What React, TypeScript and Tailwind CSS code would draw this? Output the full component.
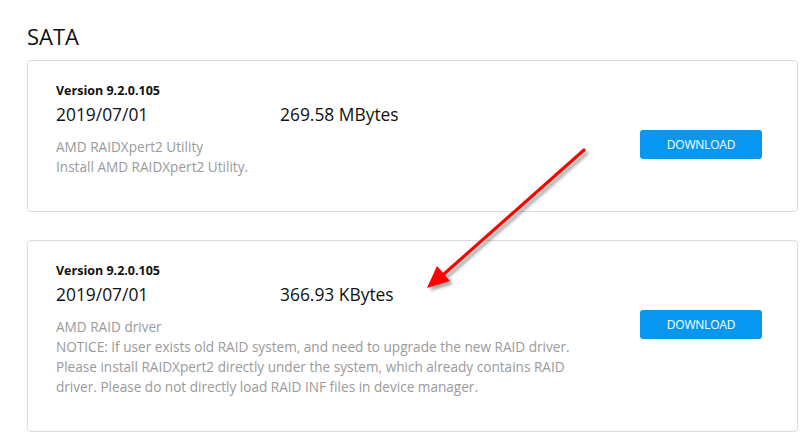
import React from 'react';

// Driver entries for the SATA section
interface DriverItem {
  version: string;
  date: string;
  size: string;
  lines: string[];
}

const drivers: DriverItem[] = [
  {
    version: '9.2.0.105',
    date: '2019/07/01',
    size: '269.58 MBytes',
    lines: ['AMD RAIDXpert2 Utility', 'Install AMD RAIDXpert2 Utility.'],
  },
  {
    version: '9.2.0.105',
    date: '2019/07/01',
    size: '366.93 KBytes',
    lines: [
      'AMD RAID driver',
      'NOTICE: If user exists old RAID system, and need to upgrade the new RAID driver.',
      'Please install RAIDXpert2 directly under the system, which already contains RAID',
      'driver. Please do not directly load RAID INF files in device manager.',
    ],
  },
];

const DriverCard = ({ item }: { item: DriverItem }) => (
  <div className="flex border border-[#dcdcdc] rounded-[4px] pt-[20px] pb-[34px] pl-[28px] pr-[35px]">
    <div className="flex-1">
      <div className="text-[12.5px] leading-[20px] font-bold text-[#111]">Version {item.version}</div>
      <div className="flex text-[17.4px] leading-[26px] text-[#111]">
        <div className="w-[224px]">{item.date}</div>
        <div>{item.size}</div>
      </div>
      <div className="mt-[10px] text-[13.6px] leading-[20px] text-[#9a9a9a]">
        {item.lines.map((l) => (
          <div key={l} className="whitespace-nowrap">{l}</div>
        ))}
      </div>
    </div>
    <button className="self-start mt-[49px] w-[122px] h-[29px] rounded-[3px] bg-[#0797f0] text-white text-[12px] tracking-[-0.2px]">
      DOWNLOAD
    </button>
  </div>
);

export default function App() {
  return (
    <div
      className="relative w-[811px] h-[444px] overflow-hidden bg-white px-[27px] pt-[20px]"
      style={{ fontFamily: '"Open Sans", "Noto Sans", sans-serif' }}
    >
      <h2 className="text-[22px] leading-[32px] text-[#111]">SATA</h2>
      <div className="mt-[8px] w-[771px] flex flex-col gap-[28px]">
        {drivers.map((d, i) => (
          <DriverCard key={i} item={d} />
        ))}
      </div>

      {/* annotation arrow */}
      <svg className="absolute left-0 top-0 pointer-events-none" width="811" height="444">
        <defs>
          <filter id="sh" x="-20%" y="-20%" width="140%" height="140%">
            <feDropShadow dx="3" dy="3" stdDeviation="1.5" floodColor="#000" floodOpacity="0.35" />
          </filter>
        </defs>
        <g filter="url(#sh)">
          <line x1="584" y1="150" x2="444" y2="274" stroke="#ff0000" strokeWidth="3.2" strokeLinecap="round" />
          <polygon points="427,288 437,266 450,281" fill="#ff0000" />
        </g>
      </svg>
    </div>
  );
}
